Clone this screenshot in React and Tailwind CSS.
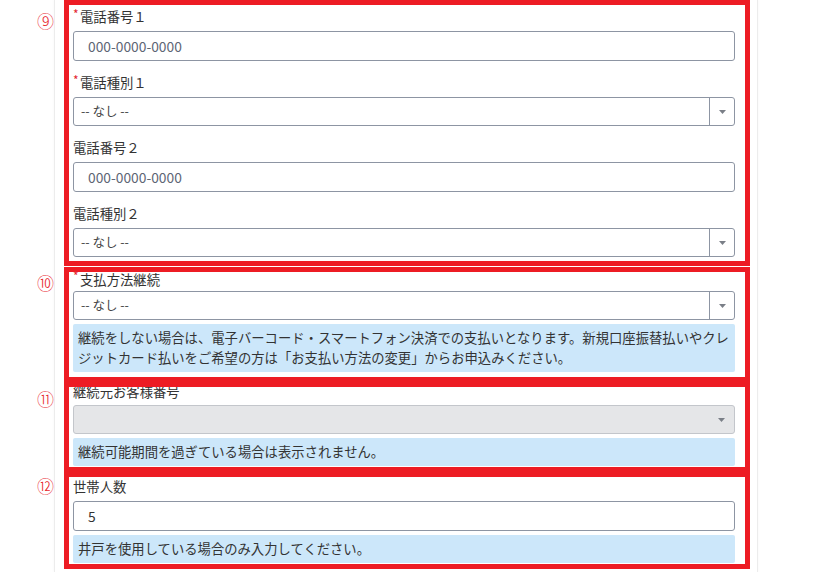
const RED = "border-[#ed1c24]";

const Label = ({ required, children }) => (
    <div className="flex h-[20px] items-center text-[13.33px] leading-[20px] text-[#333]">
        {required && (
            <span className="mr-[1px] -mt-[7px] w-[6px] text-[12px] leading-none text-[#e3262f]">*</span>
        )}
        <span>{children}</span>
    </div>
);

const TextInput = ({ value, placeholder }) => (
    <div className="flex h-[30px] items-center rounded-[3px] border border-[#8d95a3] bg-white pl-[14px] text-[13.8px]">
        {value ? (
            <span className="text-[#333]">{value}</span>
        ) : (
            <span className="text-[#5d6574]">{placeholder}</span>
        )}
    </div>
);

const Arrow = () => (
    <svg width="7" height="4" viewBox="0 0 7 4">
        <path d="M0 0h7L3.5 4z" fill="#7a7f87" />
    </svg>
);

const Select = ({ disabled }) =>
    disabled ? (
        <div className="flex h-[29px] items-center rounded-[3px] border border-[#c3c6cb] bg-[#e5e6e8]">
            <div className="flex-1" />
            <div className="flex w-[25px] justify-center">
                <Arrow />
            </div>
        </div>
    ) : (
        <div className="flex h-[29px] items-stretch rounded-[3px] border border-[#8d95a3] bg-white">
            <div className="flex flex-1 items-center pl-[7px] text-[12.5px] text-[#444]">-- なし --</div>
            <div className="flex w-[25px] items-center justify-center border-l border-[#8d95a3]">
                <Arrow />
            </div>
        </div>
    );

const Info = ({ children }) => (
    <div className="mt-[4px] rounded-[2px] bg-[#cce7fa] px-[5px] py-[4px] text-[13.33px] leading-[20px] text-[#333]">
        {children}
    </div>
);

const Mark = ({ children, top }) => (
    <span
        className={`absolute -left-[32px] text-[17px] font-light leading-none text-[#e8262d] ${top}`}
    >
        {children}
    </span>
);

export default function App() {
    return (
        <div
            className="h-[572px] w-[829px] overflow-hidden bg-white"
            style={{ fontFamily: '"Noto Sans CJK JP", "Noto Sans", sans-serif' }}
        >
            <div className="ml-[54px] h-full w-[704px] border-x border-[#ececec] bg-white pl-[9px] shadow-[0_0_3px_rgba(0,0,0,0.04)]">
                <div className="w-[686px]">
                    {/* 9 */}
                    <section className={`relative border-[5px] ${RED} pb-[4px] pl-[4px] pr-[10px] pt-[2px]`}>
                        <Mark top="top-[7px]">⑨</Mark>
                        <Label required>電話番号１</Label>
                        <div className="mt-[4px]">
                            <TextInput placeholder="000-0000-0000" />
                        </div>
                        <div className="mt-[12px]">
                            <Label required>電話種別１</Label>
                        </div>
                        <div className="mt-[4px]">
                            <Select />
                        </div>
                        <div className="mt-[12px]">
                            <Label>電話番号２</Label>
                        </div>
                        <div className="mt-[4px]">
                            <TextInput placeholder="000-0000-0000" />
                        </div>
                        <div className="mt-[12px]">
                            <Label>電話種別２</Label>
                        </div>
                        <div className="mt-[4px]">
                            <Select />
                        </div>
                    </section>

                    {/* 10 */}
                    <section className={`relative mt-[1px] border-[5px] ${RED} pb-[5px] pl-[4px] pr-[10px]`}>
                        <Mark top="top-[2px]">⑩</Mark>
                        <div className="flex h-[15px] items-center text-[13.33px] leading-[15px] text-[#333]">
                            <span className="mr-[1px] -mt-[7px] w-[6px] text-[12px] leading-none text-[#e3262f]">*</span>
                            <span>支払方法継続</span>
                        </div>
                        <div className="mt-[4px]">
                            <Select />
                        </div>
                        <Info>
                            継続をしない場合は、電子バーコード・スマートフォン決済での支払いとなります。新規口座振替払いやクレ
                            <br />
                            ジットカード払いをご希望の方は「お支払い方法の変更」からお申込みください。
                        </Info>
                    </section>

                    {/* 11 */}
                    <section className={`relative -mt-[1px] border-[5px] border-t-[6px] ${RED} pb-[1px] pl-[4px] pr-[10px]`}>
                        <Mark top="top-[3px]">⑪</Mark>
                        <div className="h-[13px] overflow-hidden">
                            <div className="-mt-[3px] text-[13.33px] leading-[16px] text-[#333]">継続元お客様番号</div>
                        </div>
                        <div className="mt-[5px]">
                            <Select disabled />
                        </div>
                        <Info>継続可能期間を過ぎている場合は表示されません。</Info>
                    </section>

                    {/* 12 */}
                    <section className={`relative border-[5px] ${RED} pb-[1px] pl-[4px] pr-[10px]`}>
                        <Mark top="top-[0px]">⑫</Mark>
                        <Label>世帯人数</Label>
                        <div className="mt-[4px]">
                            <TextInput value="5" />
                        </div>
                        <Info>井戸を使用している場合のみ入力してください。</Info>
                    </section>
                </div>
            </div>
        </div>
    );
}
